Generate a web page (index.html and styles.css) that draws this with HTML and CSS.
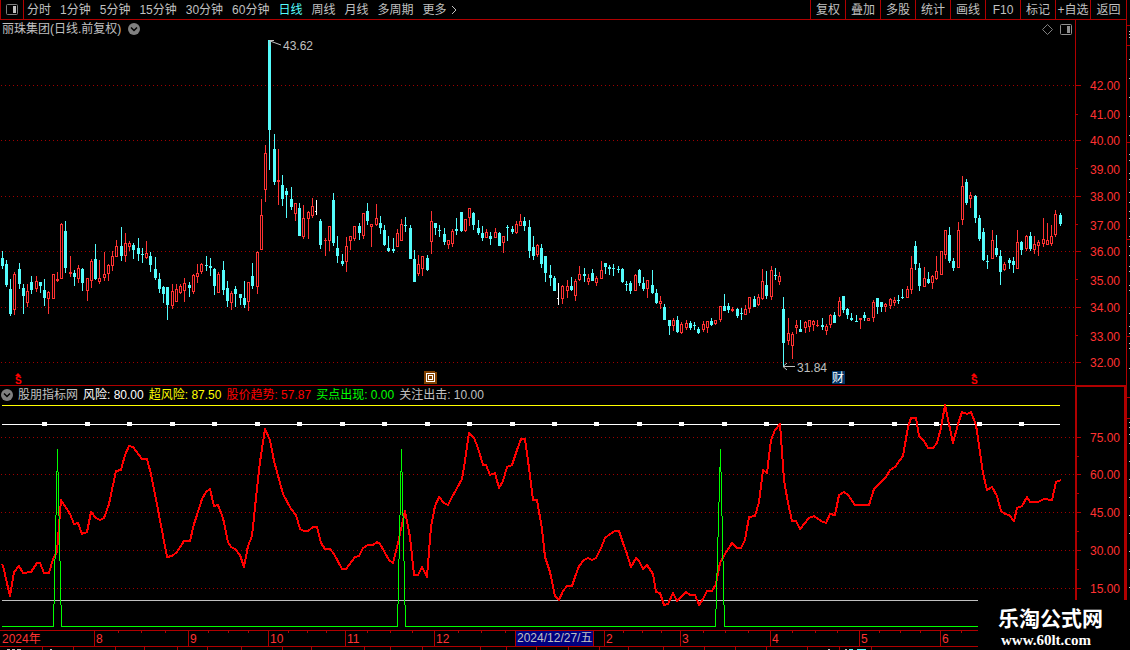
FILE: index.html
```html
<!DOCTYPE html>
<html lang="zh-CN">
<head>
<meta charset="utf-8">
<title>丽珠集团 日线</title>
<link rel="stylesheet" href="styles.css">
</head>
<body>
<div class="app">
  <div class="terminal">
    <header class="toolbar">
      <button class="panel-toggle" aria-label="侧栏"><svg width="12" height="11" viewBox="0 0 12 11"><rect x="0.5" y="0.5" width="11" height="10" rx="1" fill="none" stroke="#808080"/><rect x="7" y="2" width="3" height="7" fill="#c0c0c0"/></svg></button>
      <nav class="periods">
        <button>分时</button><button>1分钟</button><button>5分钟</button><button>15分钟</button><button>30分钟</button><button>60分钟</button><button class="active">日线</button><button>周线</button><button>月线</button><button>多周期</button><button class="more">更多<svg width="6" height="10" viewBox="0 0 6 10"><path d="M1 1l4 4-4 4" fill="none" stroke="#c0c0c0"/></svg></button>
      </nav>
      <div class="tools">
        <button>复权</button><button>叠加</button><button>多股</button><button>统计</button><button>画线</button><button>F10</button><button>标记</button><button>+自选</button><button>返回</button>
      </div>
    </header>

    <section class="price">
      <div class="price-head">
        <div class="price-title">
          <h1>丽珠集团(日线.前复权)</h1>
          <button aria-label="展开"><svg width="12" height="12" viewBox="0 0 12 12"><circle cx="6" cy="6" r="6" fill="#808080"/><path d="M3 4.5l3 3 3-3" fill="none" stroke="#000" stroke-width="1.5"/></svg></button>
          <span class="spacer"></span>
          <button aria-label="标记点"><svg width="11" height="11" viewBox="0 0 11 11"><path d="M5.5 .5l5 5-5 5-5-5z" fill="none" stroke="#808080"/></svg></button>
          <button aria-label="右侧栏"><svg width="12" height="11" viewBox="0 0 12 11"><rect x="0.5" y="0.5" width="11" height="10" rx="1" fill="none" stroke="#909090"/><rect x="7" y="2" width="3" height="7" fill="#909090"/></svg></button>
        </div>
        <div class="axis-head"></div>
      </div>
      <svg class="chart" id="price-chart" viewBox="0 38 1126 347"></svg>
    </section>

    <section class="indicator">
      <div class="indicator-head">
        <div class="legend">
          <button aria-label="展开"><svg width="12" height="12" viewBox="0 0 12 12"><circle cx="6" cy="6" r="6" fill="#808080"/><path d="M3 4.5l3 3 3-3" fill="none" stroke="#000" stroke-width="1.5"/></svg></button>
          <span class="name">股朋指标网</span>
          <span class="risk">风险: 80.00</span>
          <span class="high-risk">超风险: 87.50</span>
          <span class="trend">股价趋势: 57.87</span>
          <span class="buy">买点出现: 0.00</span>
          <span class="watch">关注出击: 10.00</span>
        </div>
        <div class="axis-head"></div>
      </div>
      <svg class="chart" id="indicator-chart" viewBox="0 403 1126 247"></svg>
    </section>
  </div>
  <aside class="edge"><svg id="edge-marks" width="3" height="650" viewBox="1127 0 3 650"></svg></aside>
  <div class="brand"><strong>乐淘公式网</strong><a href="#">www.60lt.com</a></div>
</div>
<script src="chart.js"></script>
</body>
</html>
```

FILE: styles.css
```css
* {
  box-sizing: border-box;
}

body {
  margin: 0;
  background: #000;
  color: #c0c0c0;
  font: 12px/18px "Liberation Sans", "Noto Sans CJK SC", sans-serif;
}

button {
  display: flex;
  align-items: center;
  padding: 0;
  border: 0;
  background: none;
  color: inherit;
  font: inherit;
  white-space: nowrap;
}

.app {
  position: relative;
  display: flex;
  overflow: hidden;
}

.terminal {
  flex: 1;
  min-width: 0;
}

.toolbar {
  display: flex;
  height: 20px;
  border-bottom: 1px solid #b00000;
  border-left: 1px solid #b00000;
}

.panel-toggle {
  width: 23px;
  justify-content: center;
  border-right: 1px solid #b00000;
}

.periods {
  display: flex;
  flex: 1;
  gap: 9px;
  padding-left: 3px;
}

.periods .active {
  color: #54fcfc;
}

.more {
  gap: 4px;
}

.tools {
  display: flex;
}

.tools button {
  width: 35px;
  justify-content: center;
  border-left: 1px solid #b00000;
}

.tools button:last-child {
  width: 36px;
}

.price {
  border-bottom: 1px solid #b00000;
}

.price-head,
.indicator-head {
  display: flex;
}

.price-title {
  display: flex;
  flex: 1;
  align-items: center;
  gap: 7px;
  height: 18px;
  padding: 0 3px 0 2px;
}

.price-title h1 {
  margin: 0;
  font-size: 12px;
  font-weight: normal;
}

.spacer {
  flex: 1;
}

.axis-head {
  width: 51px;
  border-left: 1px solid #b00000;
}

.indicator-head .axis-head {
  border: 2px solid #b00000;
  border-top-width: 1px;
  border-bottom: 0;
}

.chart {
  display: block;
  width: 100%;
  height: auto;
}

.legend {
  display: flex;
  flex: 1;
  align-items: center;
  gap: 5px;
  height: 17px;
  padding-left: 1px;
}

.risk {
  color: #fff;
}

.high-risk {
  color: #ff0;
}

.trend {
  color: #f00;
}

.buy {
  color: #0f0;
}

.edge {
  width: 4px;
  border-left: 1px solid #b00000;
}

.edge svg {
  display: block;
}

.brand {
  position: absolute;
  right: 0;
  bottom: 0;
  display: flex;
  flex-direction: column;
  gap: 4px;
  width: 152px;
  height: 50px;
  padding: 5px 0 0 20px;
  background: #000;
  color: #fff;
}

.brand strong {
  font: bold 21px/24px "Noto Sans CJK SC", sans-serif;
}

.brand a {
  padding-left: 3px;
  color: #fff;
  font: bold 15px/15px "Liberation Serif", serif;
  text-decoration: none;
}

.crisp {
  shape-rendering: crispEdges;
}

.grid {
  stroke: #a00000;
  stroke-dasharray: 1 3;
}

.rule {
  fill: none;
  stroke: #b00000;
}

.axis-text {
  fill: #ff3232;
}

.note {
  fill: #c0c0c0;
}

.note-line {
  fill: none;
  stroke: #c0c0c0;
}

.trend-line {
  fill: none;
  stroke: #f00;
  stroke-width: 2;
  stroke-linejoin: round;
}

.buy-line {
  fill: none;
  stroke: #0f0;
}

.mark-s {
  fill: #f00;
  font-size: 10px;
  font-weight: bold;
}

.mark-text {
  fill: #fff;
}
```

FILE: chart.js
```js
// Each candle: high, body top, body bottom, low, kind (r rising, c falling, w flat)
const candles = `251 258 266 269 c;260 264 285 287 c;279 289 314 316 c;272 274 310 315 r;263 269 284 289 c;284 288 296 314 c;284 291 303 307 r;276 282 290 294 c;276 281 289 292 r;282 282 286 293 c
279 290 298 306 c;291 292 299 314 r;274 274 299 299 r;272 279 281 282 r;223 224 279 279 r;221 231 268 273 c;256 272 274 277 r;270 273 277 286 c;265 268 279 283 r;268 269 283 291 c
278 278 291 301 r;259 261 281 288 r;244 259 279 280 c;260 278 282 284 r;252 274 278 281 r;264 265 274 281 r;251 256 266 271 r;240 246 257 257 r;227 246 256 261 c;233 243 256 262 r
241 243 247 251 r;243 245 250 259 c;238 248 254 261 c;248 254 255 263 c;241 253 258 259 r;252 256 265 272 c;257 269 278 280 c;273 279 289 293 c;286 287 294 303 c;287 287 305 320 c
284 291 306 309 r;284 289 302 302 r;284 286 293 294 r;278 283 291 302 r;282 285 288 297 c;274 275 292 294 r;264 273 277 283 r;263 264 272 274 r;256 265 266 271 c;258 266 268 276 c
268 269 286 295 c;272 274 293 293 r;261 270 290 295 c;281 288 301 307 c;291 293 303 310 r;286 289 294 307 c;294 294 298 305 c;281 298 305 308 c;282 282 302 311 r;263 276 286 289 c
251 252 287 294 r;199 215 250 250 r;145 153 190 202 r;40 40 130 170 c;134 149 182 185 c;149 180 182 205 r;175 185 199 206 c;188 191 195 218 c;187 199 207 210 c;203 203 214 221 r
203 208 236 236 c;205 218 237 239 r;211 212 219 239 r;198 206 216 218 r;200 211 212 215 w;219 221 245 249 c;238 240 241 256 r;226 226 241 251 r;193 200 243 246 c;236 248 256 263 c
254 261 264 266 c;237 246 262 272 r;236 236 241 250 r;226 226 239 241 r;223 226 233 240 c;213 213 236 239 r;203 211 221 225 c;224 224 227 247 r;204 218 225 226 r;216 223 228 234 c
225 230 245 246 c;236 248 251 252 c;238 249 251 253 c;229 233 247 247 r;219 224 241 241 r;217 225 226 232 c;225 228 259 259 c;250 259 282 282 c;255 264 274 276 r;256 256 269 276 r
255 258 270 271 c;211 221 242 254 r;223 223 228 235 c;225 230 231 237 c;228 234 242 245 c;240 240 245 249 r;229 231 244 247 r;218 229 231 235 c;212 212 231 232 c;219 219 231 232 r
208 208 218 226 r;212 213 225 230 c;220 228 233 235 c;226 233 238 241 c;229 232 238 238 r;232 236 239 245 c;228 232 238 238 r;232 233 246 246 c;236 236 243 253 r;225 227 228 241 c
226 229 232 234 c;221 224 233 234 r;214 221 226 226 r;217 221 226 231 c;220 227 251 258 c;236 247 256 260 c;244 245 255 257 r;244 248 264 268 c;256 256 273 282 c;265 275 278 286 c
276 278 291 291 c;283 298 299 305 w;285 286 299 304 r;280 286 291 298 r;277 286 290 291 c;279 281 296 301 r;266 274 280 281 r;268 274 276 282 c;274 278 282 285 r;269 273 281 281 c
276 278 283 286 r;261 270 279 279 r;263 263 267 274 c;265 267 269 275 c;264 268 269 276 c;266 269 270 273 c;268 269 282 283 c;281 284 285 291 c;281 283 291 294 c;274 275 291 291 r
269 270 283 286 c;277 283 289 291 c;280 280 289 298 r;270 285 293 294 c;289 293 303 304 c;296 301 304 309 r;304 307 320 320 c;320 320 326 335 c;318 320 326 331 r;316 320 332 333 c
322 324 333 334 r;320 323 328 330 r;321 323 328 330 c;322 325 326 330 c;327 329 333 334 c;321 324 330 332 r;321 321 328 333 r;318 321 325 326 c;320 320 324 325 r;306 306 320 322 r
294 306 311 311 c;303 306 310 313 c;307 309 311 312 r;308 309 316 318 c;308 313 314 320 c;305 309 315 315 r;297 297 309 313 r;296 299 307 307 c;294 297 305 306 r;269 281 299 300 r
271 285 296 299 c;266 270 297 300 r;268 275 276 280 c;272 276 282 285 r;297 309 343 367 c;318 333 341 345 r;332 334 346 359 r;320 325 328 334 r;320 329 332 332 c;321 322 328 333 r
320 320 327 332 r;320 321 325 331 r;320 325 326 327 r;318 325 327 330 c;324 326 331 335 r;314 315 325 328 r;312 315 323 323 c;297 301 316 317 r;296 296 310 313 c;308 309 315 319 c
313 318 320 321 c;315 321 322 322 c;318 318 320 329 r;312 315 318 321 c;318 318 321 321 r;300 302 318 322 r;298 298 307 314 c;302 302 307 312 c;303 304 307 312 r;298 299 306 309 r
297 300 303 306 r;295 300 301 304 c;289 297 298 299 c;286 289 298 298 r;256 268 290 294 r;241 246 264 270 c;263 268 286 291 c;267 278 287 287 r;272 279 283 284 c;275 276 283 289 r
256 271 279 280 r;251 251 275 275 r;230 230 255 259 r;227 235 261 263 c;258 261 268 271 c;222 230 268 268 r;176 186 220 225 r;179 182 203 205 c;192 195 199 208 r;195 196 218 223 c
215 218 239 241 c;228 232 260 261 c;255 261 262 269 c;230 240 259 259 r;235 248 255 257 c;250 256 272 285 c;262 264 270 271 r;258 260 263 269 c;257 261 265 273 c;230 242 269 269 r
241 242 250 255 c;235 236 249 251 r;232 236 249 251 c;236 244 250 254 r;240 242 246 256 r;218 239 244 247 r;223 240 245 245 r;225 236 244 246 r;210 214 235 237 r;213 215 224 226 c`
  .split(/[;\n]/).map(row => row.split(" "));

const trend = `2,564 4,569 6,579 10,596 14,572 19,566 23,573 31,572 37,563 40,563 44,573 49,573 53,559 57,552 61,500 70,514 74,524 78,523 82,534 87,532 91,512 96,518 100,520 104,518 109,504 116,471 121,470 125,455 129,446 133,447 142,459 147,459 151,474 155,494 167,557 172,556 177,552 184,541 190,541 194,524 197,515 202,499 206,492 210,489 214,506 218,505 223,518 228,542 231,547 235,549 240,555 244,567 248,546 252,536 256,498 260,462 265,429 270,440 274,461 283,494 291,509 296,515 300,529 304,531 308,531 313,527 317,527 321,543 325,549 330,549 334,554 342,569 346,569 355,557 359,556 363,548 368,545 373,545 377,542 380,544 389,560 393,563 398,543 401,529 405,511 410,537 414,575 418,575 422,567 427,577 431,527 435,506 439,497 444,503 448,505 452,497 456,490 462,479 465,461 469,433 474,438 478,448 483,465 486,465 490,475 495,473 499,488 503,481 507,467 512,465 517,450 521,439 525,439 529,468 533,500 537,500 542,529 545,557 550,572 555,596 559,600 563,591 567,586 572,586 575,577 579,566 584,560 588,558 592,560 596,558 601,548 605,538 610,534 615,531 619,531 623,543 627,554 631,567 636,558 639,561 643,569 647,565 653,574 656,592 660,593 664,605 668,604 673,593 677,601 682,596 686,592 690,595 695,595 699,605 703,599 707,591 712,591 716,584 720,563 725,554 732,543 737,548 741,548 745,540 749,517 755,516 759,502 763,470 767,473 771,440 775,430 780,424 784,480 788,503 792,521 796,521 800,529 809,518 814,516 821,521 826,523 830,514 835,515 839,495 844,492 848,495 855,505 869,505 874,489 886,477 890,470 895,467 903,456 908,427 911,418 916,418 919,436 924,441 928,448 933,448 937,443 941,428 945,405 953,443 958,424 962,412 967,414 971,412 976,425 983,473 987,490 992,487 997,496 1001,511 1005,514 1009,515 1014,521 1017,508 1022,506 1027,497 1030,502 1038,502 1044,499 1052,500 1056,482 1061,480`;

const hline = (y, x1, x2, color) => `<path d="M${x1} ${y + 0.5}H${x2}" stroke="${color}"/>`;
const grid = ys => ys.map(y => `<path class="grid" d="M1 ${y + 0.5}H1075"/>`).join("");
const ticks = (ys, end) => ys.map(y => `<path class="rule" d="M1076 ${y + 0.5}H${end}"/>`).join("");
const label = (x, y, text, cls = "axis-text") => `<text class="${cls}" x="${x}" y="${y}">${text}</text>`;

function drawCandle([high, top, bottom, low, kind], i) {
  const x = 2 + Math.floor(i * 4.2485 + 0.19);
  const color = { r: "#ff3232", c: "#54fcfc", w: "#ffffff" }[kind];
  const wick = `<path d="M${x + 0.5} ${high}V${top}M${x + 0.5} ${bottom}V${low}" stroke="${color}"/>`;
  if (kind === "w") {
    return `<path d="M${x + 0.5} ${high}V${low}M${x - 1} ${+top + 0.5}H${x + 1}" stroke="${color}"/>`;
  }
  const height = bottom - top;
  if (kind === "c" || height < 3) {
    return wick + `<rect x="${x - 1}" y="${top}" width="3" height="${height}" fill="${color}"/>`;
  }
  return wick + `<rect x="${x - 0.5}" y="${+top + 0.5}" width="2" height="${height - 1}" fill="none" stroke="${color}"/>`;
}

const sMark = x => `<path d="M${x - 3} 376l3-3 3 3z" fill="#f00"/><text class="mark-s" x="${x - 3}" y="384">S</text>`;

const priceLabels = [[42, 90], [41, 119], [40, 145], [39, 174], [38, 201], [37, 230], [36, 256], [35, 285], [34, 312], [33, 341], [32, 367]];
document.getElementById("price-chart").innerHTML =
  `<g class="crisp">${grid([85, 140, 196, 251, 307, 362])}
  <path class="rule" d="M1075.5 38V385"/>
  ${ticks([85, 140, 196, 251, 307, 362], 1081)}${ticks([114, 168, 224, 279, 335], 1078)}
  ${candles.map(drawCandle).join("")}</g>
  ${priceLabels.map(([v, y]) => label(1090, y, v.toFixed(2))).join("")}
  <path class="note-line" d="M281 45l-11-4M270 46V40.5h4"/>${label(283, 50, "43.62", "note")}
  <path class="note-line" d="M795 366.5H784M787 363l-4 3.5 4 3.5"/>${label(797, 372, "31.84", "note")}
  ${sMark(18)}${sMark(974)}
  <g class="crisp"><path d="M424 371h11v1h2v12h-13z" fill="#804000"/>
  <rect x="426.5" y="373.5" width="8" height="8" fill="none" stroke="#fff"/>
  <rect x="428.5" y="375.5" width="4" height="4" fill="none" stroke="#fff"/></g>
  <rect x="832" y="371" width="13" height="13" fill="#003468"/>${label(832, 382, "财", "mark-text")}`;

const markers = [44, 87, 129, 172, 214, 257, 299, 342, 384, 427, 469, 512, 554, 596, 639, 681, 724, 766, 809, 851, 894, 936, 979, 1021];
const months = [[94, "8"], [188, "9"], [268, "10"], [345, "11"], [434, "12"], [604, "2"], [680, "3"], [770, "4"], [859, "5"], [940, "6"]];
const minor = [118, 141, 165, 208, 228, 248, 288, 307, 326, 367, 390, 412, 458, 481, 505, 623, 642, 661, 703, 725, 748, 792, 815, 837, 879, 900, 920, 961];
const footer = [42, 73, 115, 144, 177, 207, 241, 282, 311, 364, 390, 422, 480, 506, 536, 568, 599, 628, 663, 704, 735, 766, 807, 839, 871];
document.getElementById("indicator-chart").innerHTML =
  `<g class="crisp">${grid([437, 474, 512, 550, 588])}
  <path class="rule" stroke-width="2" d="M1076 403V600M1125 403V600"/>
  ${ticks([437, 474, 512, 550, 588], 1081)}${ticks([456, 493, 531, 569], 1079)}
  ${hline(405, 2, 1060, "#ffff00")}${hline(424, 2, 1060, "#ffffff")}
  ${markers.map(x => `<rect x="${x - 2}" y="422" width="5" height="4" fill="#fff"/>`).join("")}
  ${hline(600, 2, 978, "#c0c0c0")}
  <polyline class="trend-line" points="${trend}"/>
  <path class="buy-line" d="M2 626.5H53.5L57.5 449L61.5 626.5H397.5L401.5 449L405.5 626.5H715.5L720.5 449L724.5 626.5H978"/>
  ${hline(630, 0, 978, "#b00000")}${hline(646, 0, 978, "#b00000")}
  ${months.map(([x]) => `<path class="rule" d="M${x + 0.5} 630V646"/>`).join("")}
  ${minor.map(x => `<path class="rule" d="M${x + 0.5} 630V633"/>`).join("")}
  ${footer.map(x => `<path class="rule" d="M${x + 0.5} 646V650"/>`).join("")}
  <path d="M7 649.5h3M12 649.5h3M17 649.5h4M50 649.5h2M828 649.5h2M845 649.5h2" stroke="#c0c0c0"/>
  <path d="M849 649.5h4M857 649.5h9" stroke="#54fcfc"/>
  <rect x="515" y="631" width="79" height="15" fill="#b00000"/><rect x="516" y="631" width="77" height="15" fill="#000080"/></g>
  ${[75, 60, 45, 30, 15].map((v, i) => label(1090, [442, 479, 517, 555, 593][i], v.toFixed(2))).join("")}
  ${label(2, 643, "2024年")}${months.map(([x, m]) => label(x + 2, 643, m)).join("")}
  ${label(517, 642, "2024/12/27/五", "note")}`;

const redMarks = [25, 45, 142, 239, 336, 397, 418];
const whiteMarks = [31, 34, 37, 59, 78, 97, 116, 135, 154, 160, 173, 179, 192, 202, 211, 218, 236, 246, 255, 266, 271, 285, 290, 313, 326, 333, 343, 348, 368, 422, 427, 434, 443, 461, 479, 497, 515, 533, 551, 569, 587];
document.getElementById("edge-marks").innerHTML = `<g class="crisp">
  ${redMarks.map(y => hline(y, 1127, 1130, "#b00000")).join("")}
  ${whiteMarks.map(y => hline(y, 1129, 1130, "#c0c0c0")).join("")}</g>`;
```
